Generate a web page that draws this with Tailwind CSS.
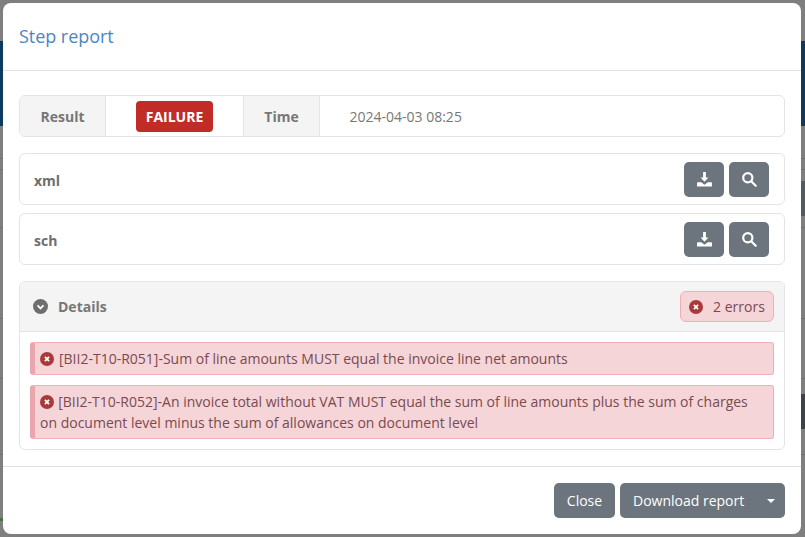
<!DOCTYPE html>
<html lang="en">
<head>
    <meta charset="UTF-8">
    <title>Step report</title>
    <script src="https://cdn.jsdelivr.net/npm/@tailwindcss/browser@4"></script>
</head>
<body class="relative w-[805px] h-[537px] overflow-hidden bg-[#7f7f7f] font-['Open_Sans',sans-serif] text-[14px] text-[#6e6e6e]">
    <!-- Page behind the backdrop -->
    <div class="flex flex-col">
        <div class="h-[41px]"></div>
        <div class="h-[85px] bg-[#0f3a60]"></div>
        <div class="h-[33px] border-b border-[#707070]"></div>
        <div class="h-[11px] border-b border-[#707070]"></div>
        <div class="h-[11px]"></div>
        <div class="h-[35px] w-[4px] ml-auto bg-[#555a5e]"></div>
        <div class="h-[12px] border-b border-[#707070]"></div>
        <div class="h-[91px] border-b border-[#707070]"></div>
        <div class="h-[60px] border-b border-[#707070]"></div>
        <div class="h-[15px]"></div>
        <div class="h-[35px] w-[4px] ml-auto bg-[#3f4347]"></div>
        <div class="h-[26px] border-b border-[#707070]"></div>
        <div class="h-[63px]"></div>
        <div class="h-[3px] w-[3px] bg-[#3f7a35]"></div>
    </div>

    <!-- Modal -->
    <div class="absolute left-[3px] top-[3px] w-[798px] h-[531px] bg-white rounded-[8px] flex flex-col">
        <div class="h-[68px] shrink-0 border-b border-[#dee2e6] flex items-center px-4">
            <h5 class="text-[18px] tracking-[-0.05px] text-[#4a86c5]">Step report</h5>
        </div>

        <div class="flex-1 px-4 pt-6 flex flex-col">
            <!-- Result row -->
            <div class="h-[42px] flex border border-[#e4e4e4] rounded-[6px] overflow-hidden">
                <div class="w-[86px] bg-[#f4f4f4] border-r border-[#e4e4e4] flex items-center justify-center font-bold text-[#777]">Result</div>
                <div class="w-[137px] flex items-center justify-center">
                    <span class="h-[31px] w-[77px] flex items-center justify-center rounded-[4px] bg-[#c12d26] text-white font-bold">FAILURE</span>
                </div>
                <div class="w-[77px] bg-[#f4f4f4] border-x border-[#e4e4e4] flex items-center justify-center font-bold text-[#777]">Time</div>
                <div class="flex-1 flex items-center pl-[29.5px] text-[#777]">2024-04-03 08:25</div>
            </div>

            <!-- Files -->
            <div class="mt-4 h-[52px] flex items-center justify-between border border-[#e4e4e4] rounded-[6px] pl-[14px] pr-[15px]">
                <span class="font-bold text-[#6e6e6e] translate-y-px">xml</span>
                <div class="flex gap-[5px]">
                    <button class="w-10 h-[35px] rounded-[5px] bg-[#6c757d] flex items-center justify-center">
                        <svg class="w-[17px] h-[17px]" viewBox="0 0 16 16" fill="#fff"><path d="M6.7 1h2.6v5.2h2.4L8 10 4.3 6.2h2.4z"/><path d="M1.5 10.5h3.4L8 13l3.1-2.5h3.4c.3 0 .5.2.5.5v3.2c0 .3-.2.5-.5.5h-13c-.3 0-.5-.2-.5-.5V11c0-.3.2-.5.5-.5z"/></svg>
                    </button>
                    <button class="w-10 h-[35px] rounded-[5px] bg-[#6c757d] flex items-center justify-center">
                        <svg class="w-[16px] h-[16px]" viewBox="0 0 16 16" fill="none" stroke="#fff" stroke-width="2.2"><circle cx="6.8" cy="6.8" r="4.6"/><path d="M10.2 10.2l4.5 4.5" stroke-linecap="round"/></svg>
                    </button>
                </div>
            </div>
            <div class="mt-2 h-[52px] flex items-center justify-between border border-[#e4e4e4] rounded-[6px] pl-[14px] pr-[15px]">
                <span class="font-bold text-[#6e6e6e] translate-y-px">sch</span>
                <div class="flex gap-[5px]">
                    <button class="w-10 h-[35px] rounded-[5px] bg-[#6c757d] flex items-center justify-center">
                        <svg class="w-[17px] h-[17px]" viewBox="0 0 16 16" fill="#fff"><path d="M6.7 1h2.6v5.2h2.4L8 10 4.3 6.2h2.4z"/><path d="M1.5 10.5h3.4L8 13l3.1-2.5h3.4c.3 0 .5.2.5.5v3.2c0 .3-.2.5-.5.5h-13c-.3 0-.5-.2-.5-.5V11c0-.3.2-.5.5-.5z"/></svg>
                    </button>
                    <button class="w-10 h-[35px] rounded-[5px] bg-[#6c757d] flex items-center justify-center">
                        <svg class="w-[16px] h-[16px]" viewBox="0 0 16 16" fill="none" stroke="#fff" stroke-width="2.2"><circle cx="6.8" cy="6.8" r="4.6"/><path d="M10.2 10.2l4.5 4.5" stroke-linecap="round"/></svg>
                    </button>
                </div>
            </div>

            <!-- Details -->
            <div class="mt-4 h-[169px] border border-[#e4e4e4] rounded-[6px] overflow-hidden">
                <div class="h-[50px] bg-[#f4f4f4] border-b border-[#e4e4e4] flex items-center justify-between pl-[13px] pr-[10px]">
                    <div class="flex items-center gap-[10px] font-bold text-[#777]">
                        <svg class="w-[15px] h-[15px]" viewBox="0 0 16 16"><circle cx="8" cy="8" r="8" fill="#6e6e6e"/><path d="M4.8 6.8L8 10l3.2-3.2" fill="none" stroke="#fff" stroke-width="2"/></svg>
                        <span>Details</span>
                    </div>
                    <div class="h-[31px] w-[94px] flex items-center justify-center gap-[10px] rounded-[6px] bg-[#f5d5d8] border border-[#f1aeb5] text-[#7a4a50]">
                        <svg class="w-[14px] h-[14px]" viewBox="0 0 16 16"><circle cx="8" cy="8" r="8" fill="#a93a3a"/><path d="M5.6 5.6l4.8 4.8m0-4.8l-4.8 4.8" stroke="#fff" stroke-width="2"/></svg>
                        <span>2 errors</span>
                    </div>
                </div>
                <div class="px-[10px] pt-[10px] flex flex-col gap-[10px]">
                    <div class="h-[33px] flex items-center gap-[5.5px] rounded-[3px] bg-[#f5d5d8] border border-[#f1aeb5] border-l-[5px] border-l-[#eaa5ad] pl-[4.5px] text-[#7a4a50]">
                        <svg class="w-[14px] h-[14px] shrink-0" viewBox="0 0 16 16"><circle cx="8" cy="8" r="8" fill="#a93a3a"/><path d="M5.6 5.6l4.8 4.8m0-4.8l-4.8 4.8" stroke="#fff" stroke-width="2"/></svg>
                        <span>[BII2-T10-R051]-Sum of line amounts MUST equal the invoice line net amounts</span>
                    </div>
                    <div class="h-[54px] rounded-[3px] bg-[#f5d5d8] border border-[#f1aeb5] border-l-[5px] border-l-[#eaa5ad] pl-[5px] pr-2 py-[5px] leading-[21px] text-[#7a4a50]">
                        <svg class="inline-block align-[-2px] w-[14px] h-[14px] mr-[1px] -ml-[0.5px]" viewBox="0 0 16 16"><circle cx="8" cy="8" r="8" fill="#a93a3a"/><path d="M5.6 5.6l4.8 4.8m0-4.8l-4.8 4.8" stroke="#fff" stroke-width="2"/></svg>
                        [BII2-T10-R052]-An invoice total without VAT MUST equal the sum of line amounts plus the sum of charges on document level minus the sum of allowances on document level
                    </div>
                </div>
            </div>
        </div>

        <!-- Footer -->
        <div class="h-[68px] shrink-0 border-t border-[#dee2e6] flex items-center justify-end gap-[5px] px-4">
            <button class="h-[35px] w-[61px] rounded-[5px] bg-[#6c757d] text-white">Close</button>
            <button class="h-[35px] w-[165px] rounded-[5px] bg-[#6c757d] text-white flex items-center pl-[13px]">
                <span>Download report</span>
                <span class="ml-[23px] w-0 h-0 border-x-[4px] border-x-transparent border-t-[4px] border-t-white"></span>
            </button>
        </div>
    </div>
</body>
</html>
